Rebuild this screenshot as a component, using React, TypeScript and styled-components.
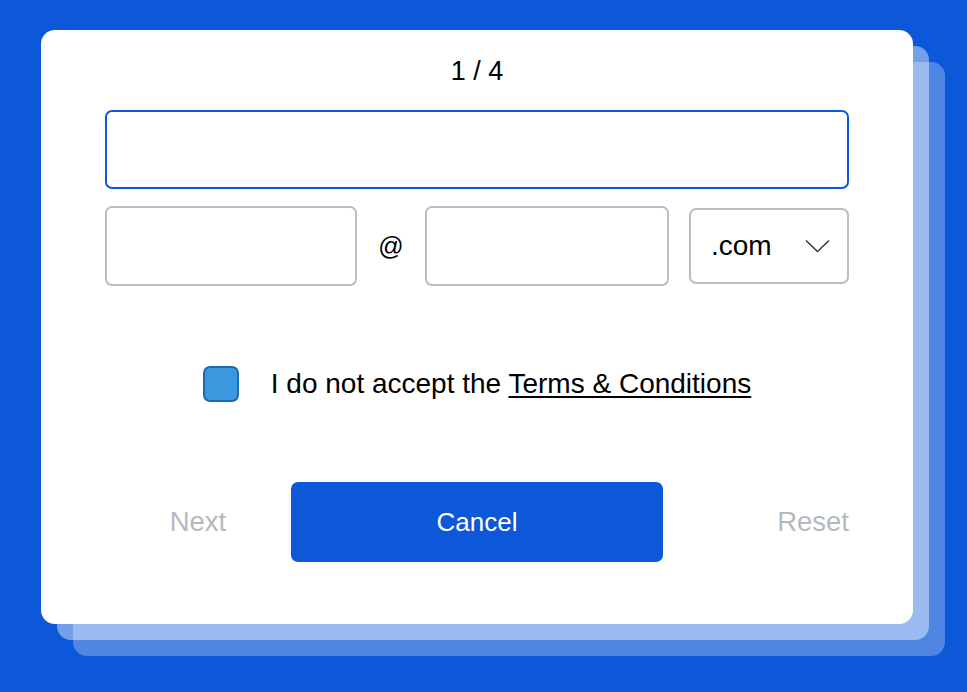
import React, { useState } from 'react'
import styled, { createGlobalStyle } from 'styled-components'

const GlobalStyle = createGlobalStyle`
  html, body {
    margin: 0;
    padding: 0;
    background: #0c58d8;
  }
  body {
    font-family: "Liberation Sans", Arial, sans-serif;
    color: #000;
  }
`

const Page = styled.main`
  min-height: 692px;
  box-sizing: border-box;
  padding: 30px 0 0 41px;
`

const Card = styled.section`
  width: 872px;
  height: 594px;
  box-sizing: border-box;
  padding: 26px 64px 0;
  background: #fff;
  border-radius: 14px;
  display: flex;
  flex-direction: column;
  box-shadow:
    16px 16px 0 rgba(255, 255, 255, 0.43),
    32px 32px 0 rgba(255, 255, 255, 0.28);
`

const Step = styled.h1`
  margin: 0;
  font-size: 27px;
  line-height: 30px;
  font-weight: 400;
  text-align: center;
`

const Field = styled.input<{ $active?: boolean; $width?: number }>`
  box-sizing: border-box;
  width: ${p => (p.$width ? `${p.$width}px` : '100%')};
  height: 80px;
  border: 2px solid ${p => (p.$active ? '#0c58d8' : '#babdc1')};
  border-radius: 7px;
  background: #fff;
  font: inherit;
  font-size: 26px;
  padding: 0 20px;
  outline: none;
`

const NameField = styled(Field)`
  height: 79px;
  margin-top: 24px;
`

const EmailRow = styled.div`
  display: flex;
  align-items: center;
  margin-top: 17px;
`

const At = styled.span`
  width: 68px;
  text-align: center;
  font-size: 25px;
`

const Select = styled.div`
  box-sizing: border-box;
  width: 160px;
  height: 76px;
  margin-left: 20px;
  border: 2px solid #babdc1;
  border-radius: 7px;
  display: flex;
  align-items: center;
  justify-content: space-between;
  padding: 0 17px 0 20px;
  font-size: 28px;
  cursor: pointer;
`

const TermsRow = styled.label`
  display: flex;
  align-items: center;
  justify-content: center;
  gap: 32px;
  margin-top: 80px;
  font-size: 28px;
  line-height: 36px;
  cursor: pointer;
`

const Box = styled.span<{ $checked: boolean }>`
  box-sizing: border-box;
  width: 36px;
  height: 36px;
  border-radius: 7px;
  border: 2px solid #1f69a8;
  background: ${p => (p.$checked ? '#3a98df' : '#fff')};
`

const TermsLink = styled.a`
  color: #000;
  text-decoration: underline;
  text-underline-offset: 3px;
`

const Actions = styled.div`
  display: grid;
  grid-template-columns: 186px 372px 186px;
  align-items: center;
  margin-top: 80px;
`

const TextButton = styled.button<{ $align: 'center' | 'end' }>`
  justify-self: ${p => p.$align};
  border: none;
  background: none;
  padding: 0;
  font: inherit;
  font-size: 27.5px;
  color: #b5b9be;
  cursor: pointer;
`

const PrimaryButton = styled.button`
  height: 80px;
  border: none;
  border-radius: 7px;
  background: #0c58d8;
  color: #fff;
  font: inherit;
  font-size: 26px;
  cursor: pointer;
`

const Chevron = () => (
  <svg width="25" height="14" viewBox="0 0 25 14" fill="none">
    <path d="M1 1.5 L12.5 12.5 L24 1.5" stroke="#333" strokeWidth="1.4" />
  </svg>
)

export default function App() {
  const [checked, setChecked] = useState(true)

  return (
    <Page>
      <GlobalStyle />
      <Card>
        <Step>1 / 4</Step>
        <NameField $active aria-label="Name" />
        <EmailRow>
          <Field $width={252} aria-label="Email user" />
          <At>@</At>
          <Field $width={244} aria-label="Email domain" />
          <Select role="combobox">
            <span>.com</span>
            <Chevron />
          </Select>
        </EmailRow>
        <TermsRow onClick={() => setChecked(!checked)}>
          <Box $checked={checked} />
          <span>
            I do not accept the <TermsLink>Terms &amp; Conditions</TermsLink>
          </span>
        </TermsRow>
        <Actions>
          <TextButton $align="center">Next</TextButton>
          <PrimaryButton>Cancel</PrimaryButton>
          <TextButton $align="end">Reset</TextButton>
        </Actions>
      </Card>
    </Page>
  )
}
